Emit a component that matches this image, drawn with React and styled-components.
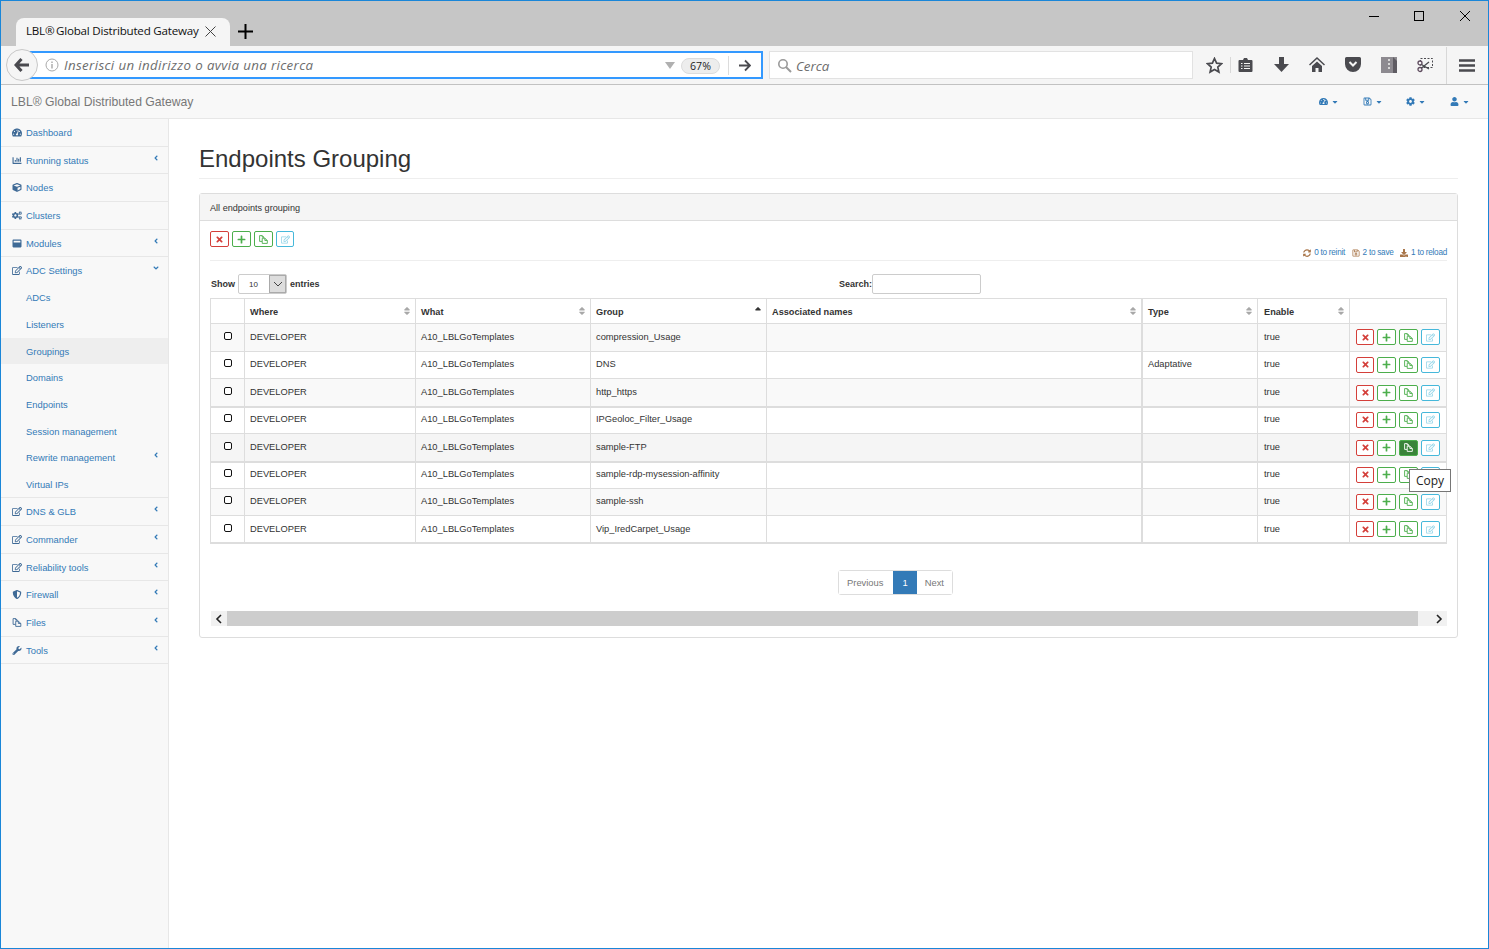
import React from 'react';
import styled, { createGlobalStyle } from 'styled-components';
import {
    FaTachometerAlt, FaChartBar, FaCube, FaCogs, FaWindowMaximize, FaRegEdit, FaShieldAlt, FaWrench,
    FaAngleLeft, FaAngleDown, FaRegSave, FaCog, FaUser, FaCaretDown, FaSort, FaSortUp,
    FaTimes, FaPlus, FaSyncAlt, FaDownload,
} from 'react-icons/fa';

const GlobalStyle = createGlobalStyle`
    html, body { margin: 0; padding: 0; background: #fff; overflow: hidden; }
    * { box-sizing: border-box; }
`;

const Frame = styled.div`
    position: relative;
    width: 1489px;
    height: 949px;
    border: 1px solid #1a86d8;
    overflow: hidden;
    font-family: "Liberation Sans", Arial, sans-serif;
    font-size: 9.4px;
    color: #333;
    background: #fff;
`;

/* browser chrome */
const TitleBar = styled.div`
    position: relative;
    height: 45px;
    background: #c6c6c6;
`;

const Tab = styled.div`
    position: absolute;
    left: 15px;
    top: 17px;
    width: 214px;
    height: 28px;
    padding: 0 0 3px 10px;
    display: flex;
    align-items: center;
    background: #f5f5f5;
    border-radius: 8px 8px 0 0;
    font-family: "Open Sans", sans-serif;
    font-size: 11.6px;
    letter-spacing: -0.22px;
    color: #111;
`;

const TabClose = styled.svg`
    position: absolute;
    left: 189px;
    top: 8px;
`;

const NewTab = styled.svg`
    position: absolute;
    left: 237px;
    top: 23px;
`;

const WinButton = styled.svg`
    position: absolute;
    top: 9px;
    left: ${p => p.$x}px;
`;

const Toolbar = styled.div`
    position: relative;
    height: 39px;
    background: #f5f5f5;
    border-bottom: 1px solid #c2c2c2;
`;

const BackButton = styled.div`
    position: absolute;
    left: 5px;
    top: 3px;
    width: 32px;
    height: 32px;
    display: flex;
    align-items: center;
    justify-content: center;
    background: #f5f5f5;
    border: 1px solid #c8c8c8;
    border-radius: 50%;
    z-index: 1;
`;

const UrlBar = styled.div`
    position: absolute;
    left: 28px;
    top: 5px;
    width: 734px;
    height: 28px;
    background: #fff;
    border: 2px solid #3399ff;
    display: flex;
    align-items: center;
`;

const ToolbarText = styled.span`
    position: relative;
    top: 1px;
    font-family: "Open Sans", sans-serif;
    font-style: italic;
    font-size: 13.3px;
    color: #6d6d6d;
    white-space: nowrap;
`;

const UrlText = styled(ToolbarText)`
    position: absolute;
    left: 33px;
    top: 3px;
    letter-spacing: 0.36px;
`;

const InfoIcon = styled.svg`
    position: absolute;
    left: 14px;
`;

const DropArrow = styled.div`
    position: absolute;
    left: 634px;
    top: 9px;
    width: 0;
    height: 0;
    border-left: 5px solid transparent;
    border-right: 5px solid transparent;
    border-top: 7px solid #b0b0b0;
`;

const Zoom = styled.div`
    position: absolute;
    left: 650px;
    top: 5px;
    width: 39px;
    height: 16px;
    border-radius: 8px;
    background: #ededed;
    border: 1px solid #dcdcdc;
    font-family: "Open Sans", sans-serif;
    font-size: 10.6px;
    line-height: 14px;
    text-align: center;
    color: #222;
`;

const GoDivider = styled.div`
    position: absolute;
    left: 697px;
    top: 3px;
    width: 1px;
    height: 19px;
    background: #dcdcdc;
`;

const GoArrow = styled.svg`
    position: absolute;
    left: 707px;
    top: 6px;
`;

const SearchBar = styled.div`
    position: absolute;
    left: 768px;
    top: 5px;
    width: 424px;
    height: 28px;
    background: #fff;
    border: 1px solid #e2e2e2;
    display: flex;
    align-items: center;
    padding-left: 7px;
    gap: 4px;
`;

const ToolIcon = styled.svg`
    position: absolute;
    left: ${p => p.$x}px;
    top: ${p => p.$y}px;
`;

const ToolSep = styled.div`
    position: absolute;
    left: ${p => p.$x}px;
    top: ${p => p.$top}px;
    width: 1px;
    height: ${p => p.$h}px;
    background: #d8d8d8;
`;

/* app navbar */
const Navbar = styled.div`
    position: relative;
    height: 34px;
    background: #f8f8f8;
    border-bottom: 1px solid #e7e7e7;
    display: flex;
    align-items: center;
    padding-left: 10px;
`;

const Brand = styled.span`
    font-size: 12.2px;
    color: #777;
`;

const NavTools = styled.div`
    position: absolute;
    top: 12px;
    left: 0;
`;

const NavTool = styled.span`
    position: absolute;
    top: 0;
    left: ${p => p.$x}px;
    display: flex;
    align-items: center;
    gap: 3px;
    color: #337ab7;
    font-size: 9px;
`;

/* layout */
const Body = styled.div`
    display: flex;
    height: 829px;
`;

const Sidebar = styled.nav`
    width: 168px;
    flex: none;
    background: #f8f8f8;
    border-right: 1px solid #e7e7e7;
`;

const MenuItem = styled.div`
    position: relative;
    height: ${p => p.$h}px;
    display: flex;
    align-items: center;
    padding-left: ${p => (p.$sub ? 25 : 11)}px;
    gap: 4px;
    color: #337ab7;
    background: ${p => (p.$active ? '#eeeeee' : 'transparent')};
    border-bottom: ${p => (p.$line ? '1px solid #e7e7e7' : 'none')};
    white-space: nowrap;

    svg.icon { width: 10px; height: 9px; flex: none; color: #3f6a96; }
`;

const Caret = styled.span`
    position: absolute;
    left: 151px;
    top: 7px;
    color: #337ab7;
    font-size: 8px;
`;

const Main = styled.main`
    flex: 1;
    position: relative;
    padding: 0 30px;
`;

const PageTitle = styled.h1`
    margin: 25px 0 0;
    height: 35px;
    font-size: 24px;
    line-height: 29px;
    font-weight: 400;
    color: #333;
    border-bottom: 1px solid #eee;
`;

const Panel = styled.section`
    margin-top: 14px;
    width: 1259px;
    height: 445px;
    border: 1px solid #ddd;
    border-radius: 3px;
    position: relative;
`;

const PanelHead = styled.div`
    height: 27px;
    background: #f5f5f5;
    border-bottom: 1px solid #ddd;
    padding-left: 10px;
    font-size: 9.1px;
    line-height: 28px;
`;

const TopActions = styled.div`
    position: absolute;
    left: 10px;
    top: 37px;
    display: flex;
    gap: 3px;
`;

const Status = styled.div`
    position: absolute;
    right: 10px;
    top: 54px;
    display: flex;
    gap: 6.5px;
    font-size: 8.2px;
    letter-spacing: -0.25px;
    color: #337ab7;

    span { display: flex; align-items: center; gap: 3px; }
    svg { color: #a9764a; width: 8px; height: 8px; }
`;

const Rule = styled.div`
    position: absolute;
    left: 10px;
    right: 10px;
    top: 66px;
    height: 1px;
    background: #eee;
`;

const FilterLabel = styled.span`
    position: absolute;
    left: ${p => p.$x}px;
    top: 85px;
    font-weight: 700;
    font-size: 9px;
`;

const LengthSelect = styled.div`
    position: absolute;
    left: 38px;
    top: 80px;
    width: 49px;
    height: 20px;
    border: 1px solid #ccc;
    border-radius: 2px;
    padding-left: 10px;
    font-size: 8px;
    line-height: 19px;
    background: #fff;
`;

const SelectButton = styled.div`
    position: absolute;
    right: 0;
    top: 0;
    width: 17px;
    height: 18px;
    background: #ddd;
    border: 1px solid #aaa;
    display: flex;
    align-items: center;
    justify-content: center;
`;

const SearchInput = styled.div`
    position: absolute;
    left: 672px;
    top: 80px;
    width: 109px;
    height: 20px;
    border: 1px solid #ccc;
    border-radius: 2px;
`;

const TableWrap = styled.div`
    position: absolute;
    left: 10px;
    top: 104px;
`;

const Table = styled.table`
    width: 1236px;
    table-layout: fixed;
    border-collapse: collapse;
    font-size: 9.3px;
`;

const Th = styled.th`
    position: relative;
    height: 25px;
    padding: 1px 5px 0 ${p => p.$pl || 5}px;
    text-align: left;
    font-weight: 700;
    font-size: 9.2px;
    border: 1px solid #ddd;
    border-left-width: ${p => (p.$thick ? 2 : 1)}px;
    color: #333;
`;

const SortMark = styled.span`
    position: absolute;
    right: 3px;
    top: 7px;
    font-size: 10px;
    color: ${p => (p.$on ? '#333' : '#a8a8a8')};
    display: flex;
`;

const Tr = styled.tr`
    height: ${p => p.$h}px;
    background: ${p => (p.$hover ? '#f5f5f5' : p.$odd ? '#f9f9f9' : '#fff')};
`;

const Td = styled.td`
    padding: 0 5px ${p => (p.$low ? 0 : 2)}px ${p => p.$pl || 5}px;
    border: 1px solid #ddd;
    border-left-width: ${p => (p.$thick ? 2 : 1)}px;
    border-top-width: ${p => (p.$heavyTop ? 2 : 1)}px;
    border-bottom-width: ${p => (p.$heavyBottom ? 2 : 1)}px;
    white-space: nowrap;
`;

const Check = styled.div`
    width: 8px;
    height: 8px;
    margin: 0 0 2px 8px;
    border: 1.4px solid #111;
    border-radius: 2px;
    background: #fff;
`;

const RowActions = styled.div`
    display: flex;
    gap: 3px;
    padding: 1px 0 0 1px;
`;

const colors = { red: '#d43f3a', green: '#4cae4c', blue: '#46b8da' };

const ActionBtn = styled.div`
    width: ${p => p.$w}px;
    height: 16px;
    border: 1px solid ${p => colors[p.$kind]};
    border-radius: 2px;
    display: flex;
    align-items: center;
    justify-content: center;
    background: ${p => (p.$on ? '#398439' : '#fff')};
    color: ${p => (p.$on ? '#fff' : colors[p.$kind])};

    svg { width: 9px; height: 9px; opacity: ${p => (p.$kind === 'blue' ? 0.6 : 1)}; }
`;

const Tooltip = styled.div`
    position: absolute;
    left: 1209px;
    top: 275px;
    width: 42px;
    height: 23px;
    background: #fff;
    border: 1px solid #767676;
    font-family: "Open Sans", sans-serif;
    font-size: 12px;
    line-height: 21px;
    text-align: center;
    color: #222;
    z-index: 2;
`;

const Pager = styled.div`
    position: absolute;
    left: 638px;
    top: 376px;
    height: 25px;
    display: flex;
    border: 1px solid #ddd;
    border-radius: 3px;
    color: #777;
    font-size: 9.4px;
    line-height: 23px;
`;

const PageLink = styled.span`
    padding: 0 ${p => p.$right}px 0 ${p => p.$left}px;
    text-align: center;
    background: ${p => (p.$on ? '#337ab7' : '#fff')};
    color: ${p => (p.$on ? '#fff' : '#777')};
`;

const Scroller = styled.div`
    position: absolute;
    left: 11px;
    top: 417px;
    width: 1236px;
    height: 15px;
    background: #f1f1f1;
    display: flex;
    align-items: center;
    justify-content: space-between;
    padding: 0 4px;
    color: #222;
`;

const Thumb = styled.div`
    position: absolute;
    left: 16px;
    top: 0;
    width: 1191px;
    height: 15px;
    background: #cdcdcd;
`;

// two overlapping sheets, the old files-o glyph
const FilesIcon = props => (
    <svg viewBox="0 0 12 12" fill="none" stroke="currentColor" strokeWidth="1.200" {...props}>
        <path d="M4 8.500H.8V.8h3.500l2 2v1.400" />
        <path d="M4.300.8v2h2" />
        <path d="M4.300 4.300h3.500l3.300 3v3.900H4.300z" />
        <path d="M7.800 4.300v3h3.300" />
    </svg>
);

const menu = [
    { label: 'Dashboard', Icon: FaTachometerAlt, h: 28, line: true },
    { label: 'Running status', Icon: FaChartBar, h: 27, line: true, caret: true },
    { label: 'Nodes', Icon: FaCube, h: 28, line: true },
    { label: 'Clusters', Icon: FaCogs, h: 28, line: true },
    { label: 'Modules', Icon: FaWindowMaximize, h: 27, line: true, caret: true },
    { label: 'ADC Settings', Icon: FaRegEdit, h: 27, open: true },
    { label: 'ADCs', sub: true, h: 27 },
    { label: 'Listeners', sub: true, h: 27 },
    { label: 'Groupings', sub: true, h: 26, active: true },
    { label: 'Domains', sub: true, h: 27 },
    { label: 'Endpoints', sub: true, h: 27 },
    { label: 'Session management', sub: true, h: 26 },
    { label: 'Rewrite management', sub: true, h: 27, caret: true },
    { label: 'Virtual IPs', sub: true, h: 27, line: true },
    { label: 'DNS & GLB', Icon: FaRegEdit, h: 28, line: true, caret: true },
    { label: 'Commander', Icon: FaRegEdit, h: 28, line: true, caret: true },
    { label: 'Reliability tools', Icon: FaRegEdit, h: 27, line: true, caret: true },
    { label: 'Firewall', Icon: FaShieldAlt, h: 28, line: true, caret: true },
    { label: 'Files', Icon: FilesIcon, h: 28, line: true, caret: true },
    { label: 'Tools', Icon: FaWrench, h: 27, line: true, caret: true },
];

const rows = [
    { group: 'compression_Usage', h: 28 },
    { group: 'DNS', type: 'Adaptative', h: 27 },
    { group: 'http_https', h: 28, low: true },
    { group: 'IPGeoloc_Filter_Usage', h: 27, heavyTop: true },
    { group: 'sample-FTP', h: 28, hover: true, active: true, heavyBottom: true, low: true },
    { group: 'sample-rdp-mysession-affinity', h: 27 },
    { group: 'sample-ssh', h: 27 },
    { group: 'Vip_IredCarpet_Usage', h: 27, heavyBottom: true, low: true },
];

const heads = [
    { label: '', w: 34 },
    { label: 'Where', w: 171, sort: true },
    { label: 'What', w: 175, sort: true },
    { label: 'Group', w: 176, sort: true, on: true },
    { label: 'Associated names', w: 375, sort: true },
    { label: 'Type', w: 116, sort: true, thick: true, pl: 5.5 },
    { label: 'Enable', w: 92, sort: true, pl: 6 },
    { label: '', w: 97 },
];

const Actions = ({ widths, active }) => (
    <>
        <ActionBtn $kind="red" $w={widths[0]}><FaTimes /></ActionBtn>
        <ActionBtn $kind="green" $w={widths[1]}><FaPlus /></ActionBtn>
        <ActionBtn $kind="green" $w={widths[2]} $on={active}><FilesIcon /></ActionBtn>
        <ActionBtn $kind="blue" $w={widths[3]}><FaRegEdit /></ActionBtn>
    </>
);

const App = () => (
    <Frame>
        <GlobalStyle />
        <TitleBar>
            <Tab>
                LBL®&#8201;Global Distributed Gateway
                <TabClose width="11" height="11" viewBox="0 0 11 11"><path d="M.5.5l10 10M10.500.5l-10 10" stroke="#444" fill="none" /></TabClose>
            </Tab>
            <NewTab width="15" height="15" viewBox="0 0 15 15"><path d="M7.500 0v15M0 7.500h15" stroke="#000" strokeWidth="2" /></NewTab>
            <WinButton $x={1367} width="12" height="12" viewBox="0 0 12 12"><path d="M1 6.500h10" stroke="#000" /></WinButton>
            <WinButton $x={1412} width="12" height="12" viewBox="0 0 12 12"><rect x="1.500" y="1.500" width="9" height="9" fill="none" stroke="#000" /></WinButton>
            <WinButton $x={1458} width="12" height="12" viewBox="0 0 12 12"><path d="M1 1l10 10M11 1L1 11" stroke="#000" /></WinButton>
        </TitleBar>
        <Toolbar>
            <BackButton>
                <svg width="16" height="14" viewBox="0 0 16 14"><path d="M7.500 1L2 7l5.500 6M2.500 7H15" fill="none" stroke="#4a4a4f" strokeWidth="3" /></svg>
            </BackButton>
            <UrlBar>
                <InfoIcon width="14" height="14" viewBox="0 0 14 14">
                    <circle cx="7" cy="7" r="6" fill="none" stroke="#aaa" />
                    <path d="M7 6v4.500M7 3.500v1.500" stroke="#999" strokeWidth="1.200" />
                </InfoIcon>
                <UrlText>Inserisci un indirizzo o avvia una ricerca</UrlText>
                <DropArrow />
                <Zoom>67%</Zoom>
                <GoDivider />
                <GoArrow width="13" height="13" viewBox="0 0 13 13"><path d="M7 1.500l5 5-5 5M12 6.500H1" fill="none" stroke="#4a4a4f" strokeWidth="1.800" /></GoArrow>
            </UrlBar>
            <SearchBar>
                <svg width="15" height="15" viewBox="0 0 15 15"><circle cx="6" cy="6" r="4.200" fill="none" stroke="#9a9a9a" strokeWidth="1.600" /><path d="M9 9l5 5" stroke="#9a9a9a" strokeWidth="2" /></svg>
                <ToolbarText>Cerca</ToolbarText>
            </SearchBar>
            <ToolIcon $x={1205} $y={11} width="17" height="17" viewBox="0 0 17 17"><path d="M8.500 1.500l2.100 4.700 5 .5-3.800 3.400 1.100 5-4.400-2.600-4.400 2.600 1.100-5L1.400 6.700l5-.5z" fill="none" stroke="#4a4a4f" strokeWidth="1.700" /></ToolIcon>
            <ToolSep $x={1229} $top={11} $h={16} />
            <ToolIcon $x={1237} $y={11} width="15" height="16" viewBox="0 0 15 16">
                <path d="M1.500 3h3.500l1-2h3l1 2h3.500a1 1 0 0 1 1 1v10a1 1 0 0 1-1 1h-12a1 1 0 0 1-1-1V4a1 1 0 0 1 1-1z" fill="#4a4a4f" />
                <path d="M3 6.500h1.500M6 6.500h6M3 9h1.500M6 9h6M3 11.500h1.500M6 11.500h6" stroke="#f5f5f5" strokeWidth="1.200" />
            </ToolIcon>
            <ToolIcon $x={1273} $y={11} width="15" height="15" viewBox="0 0 15 15"><path d="M5 0h5v7h5l-7.500 8L0 7h5z" fill="#4a4a4f" /></ToolIcon>
            <ToolIcon $x={1308} $y={11} width="16" height="15" viewBox="0 0 16 15"><path d="M8 0L0 7.500l1 1L8 2l7 6.500 1-1zM3 9l5-4.500L13 9v6H9.500v-4h-3v4H3z" fill="#4a4a4f" /></ToolIcon>
            <ToolIcon $x={1344} $y={11} width="16" height="15" viewBox="0 0 16 15">
                <path d="M1.500 0h13A1.500 1.500 0 0 1 16 1.500V7a8 8 0 0 1-16 0V1.500A1.500 1.500 0 0 1 1.500 0z" fill="#4a4a4f" />
                <path d="M4.500 5L8 8.500 11.500 5" fill="none" stroke="#f5f5f5" strokeWidth="2" />
            </ToolIcon>
            <ToolIcon $x={1380} $y={11} width="16" height="16" viewBox="0 0 16 16">
                <rect width="16" height="16" fill="#8d8a90" />
                <path d="M12 0l4 4v12h-4z" fill="#5f5c63" />
                <path d="M7 2h2v2H7zM7 6h2v2H7zM7 10h2v2H7z" fill="#d6d6d6" />
            </ToolIcon>
            <ToolIcon $x={1416} $y={11} width="17" height="16" viewBox="0 0 17 16">
                <rect x="3.500" y="1.500" width="12" height="9" fill="none" stroke="#4a4a4f" strokeDasharray="2 1.500" />
                <circle cx="3" cy="12.500" r="2" fill="#f5f5f5" stroke="#5e4b5e" strokeWidth="1.300" />
                <circle cx="3" cy="6" r="2" fill="#f5f5f5" stroke="#5e4b5e" strokeWidth="1.300" />
                <path d="M4.500 7.500L12 12M4.500 11L12 5" stroke="#4a4a4f" strokeWidth="1.300" />
            </ToolIcon>
            <ToolSep $x={1445} $top={1} $h={37} />
            <ToolIcon $x={1458} $y={13} width="16" height="13" viewBox="0 0 16 13"><path d="M0 1.500h16M0 6.500h16M0 11.500h16" stroke="#4a4a4f" strokeWidth="2.400" /></ToolIcon>
        </Toolbar>
        <Navbar>
            <Brand>LBL® Global Distributed Gateway</Brand>
            <NavTools>
                <NavTool $x={1318}><FaTachometerAlt /><FaCaretDown size={8} /></NavTool>
                <NavTool $x={1362}><FaRegSave /><FaCaretDown size={8} /></NavTool>
                <NavTool $x={1405}><FaCog /><FaCaretDown size={8} /></NavTool>
                <NavTool $x={1449}><FaUser /><FaCaretDown size={8} /></NavTool>
            </NavTools>
        </Navbar>
        <Body>
            <Sidebar>
                {menu.map(({ label, Icon, h, line, caret, open, sub, active }) => (
                    <MenuItem key={label} $h={h} $line={line} $sub={sub} $active={active}>
                        {Icon && <Icon className="icon" />}
                        {label}
                        {caret && <Caret><FaAngleLeft /></Caret>}
                        {open && <Caret><FaAngleDown /></Caret>}
                    </MenuItem>
                ))}
            </Sidebar>
            <Main>
                <PageTitle>Endpoints Grouping</PageTitle>
                <Panel>
                    <PanelHead>All endpoints grouping</PanelHead>
                    <TopActions><Actions widths={[19, 19, 19, 18]} /></TopActions>
                    <Status>
                        <span><FaSyncAlt /> 0 to reinit</span>
                        <span><FaRegSave /> 2 to save</span>
                        <span><FaDownload /> 1 to reload</span>
                    </Status>
                    <Rule />
                    <FilterLabel $x={11}>Show</FilterLabel>
                    <LengthSelect>
                        10
                        <SelectButton>
                            <svg width="10" height="6" viewBox="0 0 10 6"><path d="M1 1l4 4 4-4" fill="none" stroke="#444" /></svg>
                        </SelectButton>
                    </LengthSelect>
                    <FilterLabel $x={90}>entries</FilterLabel>
                    <FilterLabel $x={639}>Search:</FilterLabel>
                    <SearchInput />
                    <TableWrap>
                        <Table>
                            <colgroup>
                                {heads.map((c, i) => <col key={i} width={c.w} />)}
                            </colgroup>
                            <thead>
                                <tr>
                                    {heads.map((c, i) => (
                                        <Th key={i} $thick={c.thick} $pl={c.pl}>
                                            {c.label}
                                            {c.sort && <SortMark $on={c.on}>{c.on ? <FaSortUp /> : <FaSort />}</SortMark>}
                                        </Th>
                                    ))}
                                </tr>
                            </thead>
                            <tbody>
                                {rows.map((r, i) => {
                                    const edge = { $heavyTop: r.heavyTop, $heavyBottom: r.heavyBottom, $low: r.low };
                                    return (
                                        <Tr key={r.group} $h={r.h} $odd={i % 2 === 0} $hover={r.hover}>
                                            <Td {...edge}><Check /></Td>
                                            <Td {...edge}>DEVELOPER</Td>
                                            <Td {...edge}>A10_LBLGoTemplates</Td>
                                            <Td {...edge}>{r.group}</Td>
                                            <Td {...edge} />
                                            <Td {...edge} $thick $pl={5.5}>{r.type}</Td>
                                            <Td {...edge} $pl={6}>true</Td>
                                            <Td {...edge}><RowActions><Actions widths={[18, 19, 19, 19]} active={r.active} /></RowActions></Td>
                                        </Tr>
                                    );
                                })}
                            </tbody>
                        </Table>
                    </TableWrap>
                    <Tooltip>Copy</Tooltip>
                    <Pager>
                        <PageLink $left={8} $right={10}>Previous</PageLink>
                        <PageLink $left={9} $right={9} $on>1</PageLink>
                        <PageLink $left={8} $right={8}>Next</PageLink>
                    </Pager>
                    <Scroller>
                        <Thumb />
                        <svg width="8" height="10" viewBox="0 0 8 10"><path d="M6 1L2 5l4 4" fill="none" stroke="#222" strokeWidth="1.600" /></svg>
                        <svg width="8" height="10" viewBox="0 0 8 10"><path d="M2 1l4 4-4 4" fill="none" stroke="#222" strokeWidth="1.600" /></svg>
                    </Scroller>
                </Panel>
            </Main>
        </Body>
    </Frame>
);

export default App;
